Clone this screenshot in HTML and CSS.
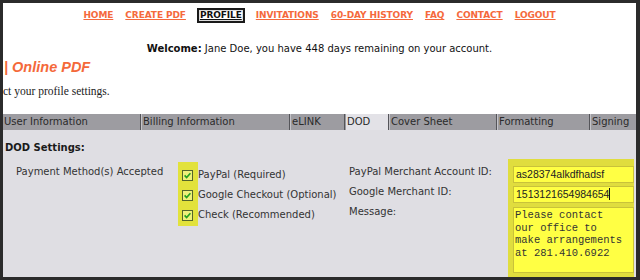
FILE: index.html
```html
<!DOCTYPE html>
<html>
<head>
<meta charset="utf-8">
<link rel="stylesheet" href="styles.css">
</head>
<body>
<div class="page">
  <nav class="topnav">
    <a class="navlink" href="#">HOME</a>
    <a class="navlink" href="#">CREATE PDF</a>
    <a class="navlink navlink--current" href="#">PROFILE</a>
    <a class="navlink" href="#">INVITATIONS</a>
    <a class="navlink" href="#">60-DAY HISTORY</a>
    <a class="navlink" href="#">FAQ</a>
    <a class="navlink" href="#">CONTACT</a>
    <a class="navlink" href="#">LOGOUT</a>
  </nav>
  <p class="welcome"><b>Welcome:</b> Jane Doe, you have 448 days remaining on your account.</p>
  <h1 class="brand">| Online PDF</h1>
  <p class="intro">ct your profile settings.</p>
  <div class="tabs">
    <div class="tab">User Information</div>
    <div class="tab">Billing Information</div>
    <div class="tab">eLINK</div>
    <div class="tab tab--active">DOD</div>
    <div class="tab">Cover Sheet</div>
    <div class="tab">Formatting</div>
    <div class="tab">Signing</div>
  </div>
  <section class="panel">
    <h2 class="panel-title">DOD Settings:</h2>
    <div class="dod">
      <div class="pm-label">Payment Method(s) Accepted</div>
      <div class="checks">
        <div class="check-row"><svg class="cb" width="11" height="11" viewBox="0 0 11 11"><rect x="0.5" y="0.5" width="10" height="10" fill="#eef07a" stroke="#55652a"/><path d="M2.6 5.4 L4.6 7.6 L8.4 3.2" fill="none" stroke="#22a020" stroke-width="1.6"/></svg></div>
        <div class="check-row"><svg class="cb" width="11" height="11" viewBox="0 0 11 11"><rect x="0.5" y="0.5" width="10" height="10" fill="#eef07a" stroke="#55652a"/><path d="M2.6 5.4 L4.6 7.6 L8.4 3.2" fill="none" stroke="#22a020" stroke-width="1.6"/></svg></div>
        <div class="check-row"><svg class="cb" width="11" height="11" viewBox="0 0 11 11"><rect x="0.5" y="0.5" width="10" height="10" fill="#eef07a" stroke="#55652a"/><path d="M2.6 5.4 L4.6 7.6 L8.4 3.2" fill="none" stroke="#22a020" stroke-width="1.6"/></svg></div>
      </div>
      <div class="check-labels">
        <div class="row">PayPal (Required)</div>
        <div class="row">Google Checkout (Optional)</div>
        <div class="row">Check (Recommended)</div>
      </div>
      <div class="field-labels">
        <div class="row">PayPal Merchant Account ID:</div>
        <div class="row">Google Merchant ID:</div>
        <div class="row">Message:</div>
      </div>
      <div class="fields">
        <div class="input">as28374alkdfhadsf</div>
        <div class="input">1513121654984654<span class="caret"></span></div>
        <div class="textarea">Please contact<br>our office to<br>make arrangements<br>at 281.410.6922</div>
      </div>
    </div>
  </section>
</div>
</body>
</html>
```
FILE: styles.css
```css
html, body {
  margin: 0;
  padding: 0;
}
body {
  background: #2b2b2b;
  padding: 3px 4px 0 3px;
  height: 280px;
  box-sizing: border-box;
  overflow: hidden;
}
.page {
  background: #fff;
  height: 274px;
  overflow: hidden;
  font-family: "DejaVu Sans", sans-serif;
  font-size: 10px;
  color: #222;
}
.topnav {
  display: flex;
  justify-content: center;
  gap: 10px;
  padding-top: 5px;
  height: 15px;
  align-items: center;
}
.navlink {
  font-weight: bold;
  font-size: 9px;
  letter-spacing: -0.1px;
  color: #f5693c;
  text-decoration: underline;
  line-height: 11px;
  padding: 1px 1px;
}
.navlink--current {
  color: #111;
  border: 2px solid #1a1a1a;
  padding: 0 1px;
  box-shadow: inset 0 0 0 1px #ddd;
}
.welcome {
  margin: 20px 0 0;
  text-align: center;
  line-height: 12px;
  color: #111;
}
.brand {
  margin: 3px 0 0 1px;
  font-family: "Liberation Sans", sans-serif;
  font-size: 14.5px;
  font-weight: bold;
  font-style: italic;
  color: #f4693a;
  line-height: 18px;
}
.intro {
  margin: 9px 0 0;
  font-family: "Liberation Serif", serif;
  font-size: 11.5px;
  line-height: 13px;
  color: #222;
}
.tabs {
  margin-top: 16px;
  display: grid;
  grid-template-columns: 137px 149px 55px 44px 108px 93px 1fr;
  height: 16px;
  background: #9d9ca1;
}
.tab {
  line-height: 16px;
  padding-left: 2px;
  color: #2a2a2a;
  border-left: 1px solid #55555a;
  box-shadow: inset 1px 0 0 #c4c3c8;
  white-space: nowrap;
  overflow: hidden;
}
.tab:first-child {
  border-left: 0;
  box-shadow: none;
  padding-left: 1px;
}
.tab--active {
  background: #e3e2e7;
  box-shadow: inset 1px 0 0 #9a9a9e;
}
.panel {
  background: #dfdee3;
  height: 170px;
}
.panel-title {
  margin: 0;
  padding: 12px 0 0 2px;
  font-size: 10px;
  font-weight: bold;
  line-height: 12px;
  color: #1a1a1a;
}
.dod {
  margin-top: 5px;
  display: grid;
  grid-template-columns: 175px 20px 151px 159px 126px;
  align-items: start;
  color: #333;
}
.pm-label {
  padding: 7px 0 0 13px;
  line-height: 12px;
}
.checks {
  margin-top: 3px;
  padding: 3px 0 1px;
  background: #e2e23c;
}
.check-row {
  height: 20px;
  display: flex;
  align-items: center;
  justify-content: center;
}
.cb {
  display: block;
  margin-left: -1px;
}
.check-labels {
  padding-top: 6px;
}
.row {
  height: 20px;
  line-height: 20px;
  white-space: nowrap;
}
.field-labels {
  padding-top: 3px;
}
.fields {
  background: #e0dd3e;
  padding: 7px 0 6px 5px;
  display: flex;
  flex-direction: column;
}
.input {
  height: 15px;
  border: 1px solid #c9c23a;
  background: #ffff44;
  font-family: "Liberation Sans", sans-serif;
  font-size: 10.5px;
  line-height: 15px;
  padding-left: 2px;
  color: #222;
  margin-bottom: 3px;
}
.input + .input {
  margin-bottom: 4px;
}
.caret {
  display: inline-block;
  width: 1px;
  height: 12px;
  background: #111;
  vertical-align: -2px;
}
.textarea {
  height: 62px;
  border: 1px solid #c9c23a;
  background: #ffff44;
  font-family: "Liberation Mono", monospace;
  font-size: 10.5px;
  line-height: 12.7px;
  padding: 1px;
  color: #333;
}
```
